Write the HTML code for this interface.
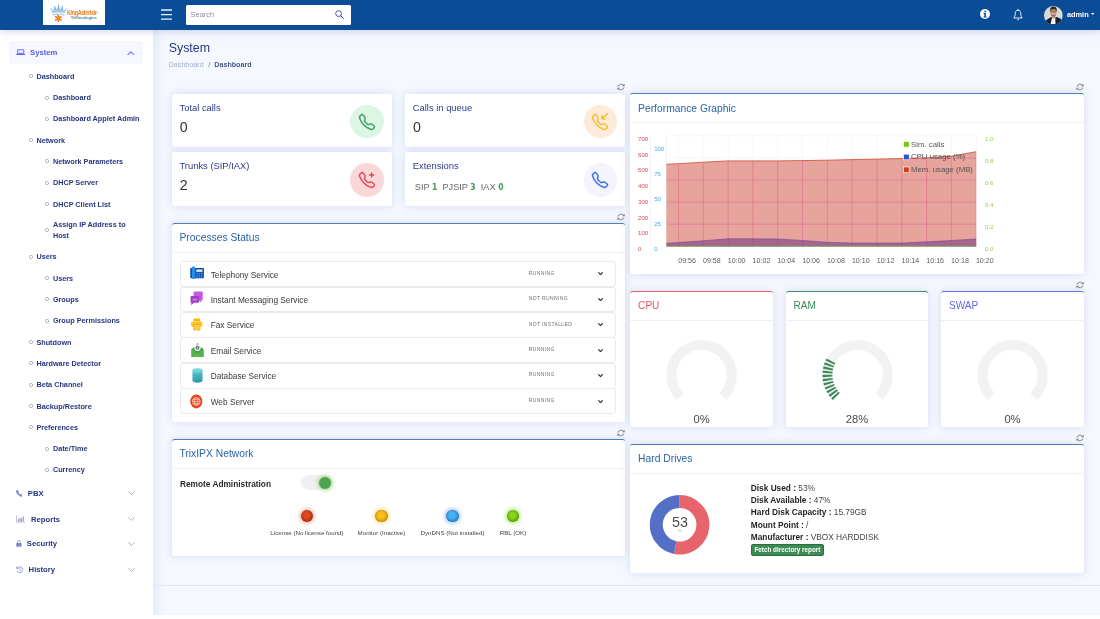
<!DOCTYPE html>
<html lang="en">
<head>
<meta charset="utf-8">
<title>System - Dashboard</title>
<style>
*{box-sizing:border-box;margin:0;padding:0}
html,body{width:1100px;height:619px;overflow:hidden;background:#fff;font-family:"Liberation Sans",sans-serif;}
body{position:relative}
#page{position:absolute;left:0;top:0;width:1100px;height:619px;overflow:hidden;will-change:transform;background:#fff}
.abs{position:absolute}
#main{position:absolute;left:153px;top:30px;width:947px;height:585.2px;background:#f5f8fe;box-shadow:inset 8px 0 8px -4px rgba(186,196,240,.3);}
#header{position:absolute;left:0;top:0;width:1100px;height:30px;background:#0a4d96;box-shadow:0 1px 8px rgba(160,170,210,.5);z-index:5}
#sidebar{position:absolute;left:0;top:30px;width:153px;height:589px;background:#fff}
.logo{position:absolute;left:43.2px;top:0;width:61.5px;height:25.1px;background:#fff}
.search{position:absolute;left:185.6px;top:5px;width:165.5px;height:19.5px;background:#fff;border-radius:1.5px}
.search span{position:absolute;left:5px;top:5px;font-size:7.4px;color:#8a8f99}
.card{position:absolute;background:#fff;border-radius:2.5px;box-shadow:0 0 9px rgba(176,184,235,.45)}
.ptitle{position:absolute;left:7.8px;top:9.6px;font-size:10.3px;color:#2a64a8;white-space:nowrap}
.sep{position:absolute;left:0;right:0;height:1px;background:#eef0f3}
.m{position:absolute;margin-top:1.1px;font-size:7.27px;font-weight:bold;color:#27367f;white-space:nowrap;line-height:10.8px}
.b{position:absolute;width:6px;height:6px;margin:-.85px 0 0 -1.05px;background:radial-gradient(circle at center,rgba(150,158,196,0) 1.25px,rgba(150,158,196,.8) 1.6px,rgba(150,158,196,.8) 1.8px,rgba(150,158,196,0) 2.2px)}
.st{position:absolute;left:7.8px;font-size:9.4px;color:#2b3a8c;white-space:nowrap}
.sv{position:absolute;left:8px;font-size:14.2px;color:#333;white-space:nowrap}
.row{position:absolute;left:8.5px;width:436px;height:25.8px;border:1px solid #e8eaf0;border-radius:3px;background:#fff}
.row .n{position:absolute;left:29.5px;top:7.4px;font-size:8.3px;color:#3a3a3a;white-space:nowrap}
.row .s{position:absolute;left:347.6px;top:7.6px;font-size:5px;color:#6e6e6e;white-space:nowrap;letter-spacing:.36px;line-height:7px}
.hd{left:120.5px;font-size:8.3px;color:#444;white-space:nowrap;line-height:11px}
.hd b{color:#1f1f1f}
.dg{position:relative;top:.6px;color:#43985e;font-size:8.5px;font-family:'DejaVu Sans Condensed','DejaVu Sans','Liberation Sans',sans-serif}
</style>
</head>
<body>
<div id="page">
<div id="main">
<div class="abs" style="left:15.7px;top:9.6px;font-size:12.4px;color:#27367f;line-height:16px">System</div>
<div class="abs" style="left:15.7px;top:29.6px;font-size:7.15px;color:#a3add0;line-height:10px;white-space:nowrap">Dashboard<span style="color:#6b769e;margin:0 4.1px 0 4.6px">/</span><b style="color:#4a5784">Dashboard</b></div>
</div>
<svg class="abs" style="left:617.4px;top:83.2px" width="8" height="8" viewBox="0 0 8 8"><path d="M6.900 2.600A3.300 3.300 0 0 0 1 3.600M1.100 5.400A3.300 3.300 0 0 0 7 4.400" fill="none" stroke="#777" stroke-width=".9"/><path d="M7.600 0.700v2.600H5zM0.400 7.300V4.700H3z" fill="#777"/></svg><svg class="abs" style="left:1076.4px;top:83.2px" width="8" height="8" viewBox="0 0 8 8"><path d="M6.900 2.600A3.300 3.300 0 0 0 1 3.600M1.100 5.400A3.300 3.300 0 0 0 7 4.400" fill="none" stroke="#777" stroke-width=".9"/><path d="M7.600 0.700v2.600H5zM0.400 7.300V4.700H3z" fill="#777"/></svg><svg class="abs" style="left:617.4px;top:212.5px" width="8" height="8" viewBox="0 0 8 8"><path d="M6.900 2.600A3.300 3.300 0 0 0 1 3.600M1.100 5.400A3.300 3.300 0 0 0 7 4.400" fill="none" stroke="#777" stroke-width=".9"/><path d="M7.600 0.700v2.600H5zM0.400 7.300V4.700H3z" fill="#777"/></svg><svg class="abs" style="left:1076.4px;top:281px" width="8" height="8" viewBox="0 0 8 8"><path d="M6.900 2.600A3.300 3.300 0 0 0 1 3.600M1.100 5.400A3.300 3.300 0 0 0 7 4.400" fill="none" stroke="#777" stroke-width=".9"/><path d="M7.600 0.700v2.600H5zM0.400 7.300V4.700H3z" fill="#777"/></svg><svg class="abs" style="left:617.4px;top:428.5px" width="8" height="8" viewBox="0 0 8 8"><path d="M6.900 2.600A3.300 3.300 0 0 0 1 3.600M1.100 5.400A3.300 3.300 0 0 0 7 4.400" fill="none" stroke="#777" stroke-width=".9"/><path d="M7.600 0.700v2.600H5zM0.400 7.300V4.700H3z" fill="#777"/></svg><svg class="abs" style="left:1076.4px;top:434px" width="8" height="8" viewBox="0 0 8 8"><path d="M6.900 2.600A3.300 3.300 0 0 0 1 3.600M1.100 5.400A3.300 3.300 0 0 0 7 4.400" fill="none" stroke="#777" stroke-width=".9"/><path d="M7.600 0.700v2.600H5zM0.400 7.300V4.700H3z" fill="#777"/></svg>
<div class="card" style="left:171.7px;top:93.7px;width:220px;height:53px">
  <div class="st" style="top:8.2px">Total calls</div>
  <div class="sv" style="top:25.3px">0</div>
  <div class="abs" style="left:178.6px;top:11.2px;width:33.4px;height:33.4px;border-radius:50%;background:#ddf5e4"></div>
  <svg class="abs" style="left:187.3px;top:19.9px;overflow:visible" width="16" height="16" viewBox="0 0 16 16"><path fill="#3d9a5f" stroke="#3d9a5f" stroke-width=".42" d="M3.654 1.328a.678.678 0 0 0-1.015-.063L1.605 2.300c-.483.484-.661 1.169-.450 1.770a17.568 17.568 0 0 0 4.168 6.608 17.569 17.569 0 0 0 6.608 4.168c.601.211 1.286.033 1.770-.450l1.034-1.034a.678.678 0 0 0-.063-1.015l-2.307-1.794a.678.678 0 0 0-.580-.122l-2.190.547a1.745 1.745 0 0 1-1.657-.459L5.482 8.062a1.745 1.745 0 0 1-.460-1.657l.548-2.190a.678.678 0 0 0-.122-.580L3.654 1.328zM1.884.511a1.745 1.745 0 0 1 2.612.163L6.290 2.980c.329.423.445.974.315 1.494l-.547 2.190a.678.678 0 0 0 .178.643l2.457 2.457a.678.678 0 0 0 .644.178l2.189-.547a1.745 1.745 0 0 1 1.494.315l2.306 1.794c.829.645.905 1.870.163 2.611l-1.034 1.034c-.740.740-1.846 1.065-2.877.702a18.634 18.634 0 0 1-7.010-4.420 18.634 18.634 0 0 1-4.420-7.009c-.362-1.030-.037-2.137.703-2.877L1.885.511z"/></svg>
</div>
<div class="card" style="left:405px;top:93.7px;width:220px;height:53px">
  <div class="st" style="top:8.2px">Calls in queue</div>
  <div class="sv" style="top:25.3px">0</div>
  <div class="abs" style="left:178.6px;top:11.2px;width:33.4px;height:33.4px;border-radius:50%;background:#fdeadb"></div>
  <svg class="abs" style="left:187.3px;top:19.9px;overflow:visible" width="16" height="16" viewBox="0 0 16 16"><path fill="#f5bb1f" stroke="#f5bb1f" stroke-width=".42" d="M3.654 1.328a.678.678 0 0 0-1.015-.063L1.605 2.300c-.483.484-.661 1.169-.450 1.770a17.568 17.568 0 0 0 4.168 6.608 17.569 17.569 0 0 0 6.608 4.168c.601.211 1.286.033 1.770-.450l1.034-1.034a.678.678 0 0 0-.063-1.015l-2.307-1.794a.678.678 0 0 0-.580-.122l-2.190.547a1.745 1.745 0 0 1-1.657-.459L5.482 8.062a1.745 1.745 0 0 1-.460-1.657l.548-2.190a.678.678 0 0 0-.122-.580L3.654 1.328zM1.884.511a1.745 1.745 0 0 1 2.612.163L6.290 2.980c.329.423.445.974.315 1.494l-.547 2.190a.678.678 0 0 0 .178.643l2.457 2.457a.678.678 0 0 0 .644.178l2.189-.547a1.745 1.745 0 0 1 1.494.315l2.306 1.794c.829.645.905 1.870.163 2.611l-1.034 1.034c-.740.740-1.846 1.065-2.877.702a18.634 18.634 0 0 1-7.010-4.420 18.634 18.634 0 0 1-4.420-7.009c-.362-1.030-.037-2.137.703-2.877L1.885.511z"/><path d="M15.600 -0.400L10 4.800M10 1.500v3.300h3.300" fill="none" stroke="#f5bb1f" stroke-width="1.3" stroke-linecap="round" stroke-linejoin="round"/></svg>
</div>
<div class="card" style="left:171.7px;top:152.3px;width:220px;height:53.6px">
  <div class="st" style="top:8.2px">Trunks (SIP/IAX)</div>
  <div class="sv" style="top:24.3px">2</div>
  <div class="abs" style="left:178.6px;top:11.2px;width:33.4px;height:33.4px;border-radius:50%;background:#fad8da"></div>
  <svg class="abs" style="left:187.3px;top:19.9px;overflow:visible" width="16" height="16" viewBox="0 0 16 16"><path fill="#e04550" stroke="#e04550" stroke-width=".42" d="M3.654 1.328a.678.678 0 0 0-1.015-.063L1.605 2.300c-.483.484-.661 1.169-.450 1.770a17.568 17.568 0 0 0 4.168 6.608 17.569 17.569 0 0 0 6.608 4.168c.601.211 1.286.033 1.770-.450l1.034-1.034a.678.678 0 0 0-.063-1.015l-2.307-1.794a.678.678 0 0 0-.580-.122l-2.190.547a1.745 1.745 0 0 1-1.657-.459L5.482 8.062a1.745 1.745 0 0 1-.460-1.657l.548-2.190a.678.678 0 0 0-.122-.580L3.654 1.328zM1.884.511a1.745 1.745 0 0 1 2.612.163L6.290 2.980c.329.423.445.974.315 1.494l-.547 2.190a.678.678 0 0 0 .178.643l2.457 2.457a.678.678 0 0 0 .644.178l2.189-.547a1.745 1.745 0 0 1 1.494.315l2.306 1.794c.829.645.905 1.870.163 2.611l-1.034 1.034c-.740.740-1.846 1.065-2.877.702a18.634 18.634 0 0 1-7.010-4.420 18.634 18.634 0 0 1-4.420-7.009c-.362-1.030-.037-2.137.703-2.877L1.885.511z"/><path d="M12.600 0.900v4.200M10.500 3h4.200" fill="none" stroke="#e04550" stroke-width="1.35" stroke-linecap="round"/></svg>
</div>
<div class="card" style="left:405px;top:152.3px;width:220px;height:53.6px">
  <div class="st" style="top:8.2px">Extensions</div>
  <div class="abs" style="left:9.8px;top:28.6px;font-size:9.2px;color:#6a6a6a;white-space:nowrap;line-height:12px">SIP <b class="dg">1</b>&nbsp; PJSIP <b class="dg">3</b>&nbsp; IAX <b class="dg">0</b></div>
  <div class="abs" style="left:178.6px;top:11.2px;width:33.4px;height:33.4px;border-radius:50%;background:#f3f4fc"></div>
  <svg class="abs" style="left:187.3px;top:19.9px;overflow:visible" width="16" height="16" viewBox="0 0 16 16"><path fill="#2f6fe8" stroke="#2f6fe8" stroke-width=".42" d="M3.654 1.328a.678.678 0 0 0-1.015-.063L1.605 2.300c-.483.484-.661 1.169-.450 1.770a17.568 17.568 0 0 0 4.168 6.608 17.569 17.569 0 0 0 6.608 4.168c.601.211 1.286.033 1.770-.450l1.034-1.034a.678.678 0 0 0-.063-1.015l-2.307-1.794a.678.678 0 0 0-.580-.122l-2.190.547a1.745 1.745 0 0 1-1.657-.459L5.482 8.062a1.745 1.745 0 0 1-.460-1.657l.548-2.190a.678.678 0 0 0-.122-.580L3.654 1.328zM1.884.511a1.745 1.745 0 0 1 2.612.163L6.290 2.980c.329.423.445.974.315 1.494l-.547 2.190a.678.678 0 0 0 .178.643l2.457 2.457a.678.678 0 0 0 .644.178l2.189-.547a1.745 1.745 0 0 1 1.494.315l2.306 1.794c.829.645.905 1.870.163 2.611l-1.034 1.034c-.740.740-1.846 1.065-2.877.702a18.634 18.634 0 0 1-7.010-4.420 18.634 18.634 0 0 1-4.420-7.009c-.362-1.030-.037-2.137.703-2.877L1.885.511z"/></svg>
</div>

<div id="sidebar">
<div class="abs" style="left:8.6px;top:11px;width:134.2px;height:22.7px;background:#f6f7ff;border-radius:2.5px"></div>
<svg class="abs" style="left:15.6px;top:18.2px" width="9.4" height="7.4" viewBox="0 0 19 15"><path d="M3.300 3.600h12.400v7H3.300z" fill="none" stroke="#5a5cf0" stroke-width="1.800"/><path d="M0.5 11.6h18v1.2c0 .9-.7 1.5-1.5 1.5H2c-.8 0-1.5-.6-1.5-1.5z" fill="#5a5cf0"/></svg>
<div class="m" style="left:30.1px;top:16.85px;color:#5a5cf0;font-size:7.7px">System</div>
<svg class="abs" style="left:127.2px;top:20.7px" width="7.7" height="4.5" viewBox="0 0 7.7 4.5"><path d="M0.500 4.100 L3.850 0.800 L7.200 4.100" fill="none" stroke="#7476f2" stroke-width="1.050"/></svg>
<div class="b" style="left:28.95px;top:44.05px"></div><div class="m" style="left:36.4px;top:40.75px">Dashboard</div>
<div class="b" style="left:45.25px;top:65.35px"></div><div class="m" style="left:52.9px;top:62.05px">Dashboard</div>
<div class="b" style="left:45.25px;top:86.65px"></div><div class="m" style="left:52.9px;top:83.35px">Dashboard Applet Admin</div>
<div class="b" style="left:28.95px;top:107.95px"></div><div class="m" style="left:36.4px;top:104.65px">Network</div>
<div class="b" style="left:45.25px;top:129.25px"></div><div class="m" style="left:52.9px;top:125.95px">Network Parameters</div>
<div class="b" style="left:45.25px;top:150.55px"></div><div class="m" style="left:52.9px;top:147.25px">DHCP Server</div>
<div class="b" style="left:45.25px;top:171.85px"></div><div class="m" style="left:52.9px;top:168.55px">DHCP Client List</div>
<div class="b" style="left:45.25px;top:197.95px"></div><div class="m" style="left:52.9px;top:189.25px">Assign IP Address to<br>Host</div>
<div class="b" style="left:28.95px;top:224.55px"></div><div class="m" style="left:36.4px;top:221.25px">Users</div>
<div class="b" style="left:45.25px;top:245.95px"></div><div class="m" style="left:52.9px;top:242.65px">Users</div>
<div class="b" style="left:45.25px;top:267.25px"></div><div class="m" style="left:52.9px;top:263.95px">Groups</div>
<div class="b" style="left:45.25px;top:288.55px"></div><div class="m" style="left:52.9px;top:285.25px">Group Permissions</div>
<div class="b" style="left:28.95px;top:309.85px"></div><div class="m" style="left:36.4px;top:306.55px">Shutdown</div>
<div class="b" style="left:28.95px;top:331.15px"></div><div class="m" style="left:36.4px;top:327.85px">Hardware Detector</div>
<div class="b" style="left:28.95px;top:352.45px"></div><div class="m" style="left:36.4px;top:349.15px">Beta Channel</div>
<div class="b" style="left:28.95px;top:373.75px"></div><div class="m" style="left:36.4px;top:370.45px">Backup/Restore</div>
<div class="b" style="left:28.95px;top:395.05px"></div><div class="m" style="left:36.4px;top:391.75px">Preferences</div>
<div class="b" style="left:45.25px;top:416.35px"></div><div class="m" style="left:52.9px;top:413.05px">Date/Time</div>
<div class="b" style="left:45.25px;top:437.65px"></div><div class="m" style="left:52.9px;top:434.35px">Currency</div>

<svg class="abs" style="left:15.7px;top:460.3px" width="6.8" height="6.8" viewBox="0 0 16 16"><path fill="#7f8bbd" d="M1.885.511a1.745 1.745 0 0 1 2.61.163L6.29 2.98c.329.423.445.974.315 1.494l-.547 2.19a.678.678 0 0 0 .178.643l2.457 2.457a.678.678 0 0 0 .644.178l2.189-.547a1.745 1.745 0 0 1 1.494.315l2.306 1.794c.829.645.905 1.87.163 2.611l-1.034 1.034c-.74.74-1.846 1.065-2.877.702a18.634 18.634 0 0 1-7.010-4.420 18.634 18.634 0 0 1-4.420-7.009c-.362-1.030-.037-2.137.703-2.877L1.885.511z"/></svg>
<div class="m" style="left:27.8px;top:458.34px;font-size:7.7px">PBX</div><svg class="abs" style="left:127.9px;top:461.20px" width="7" height="4" viewBox="0 0 7 4"><path d="M0.4 0.4 L3.5 3.4 L6.6 0.4" fill="none" stroke="#98a2c9" stroke-width=".85"/></svg>
<svg class="abs" style="left:15.7px;top:485px" width="9.6" height="7.6" viewBox="0 0 19 15"><path d="M0.8 0.5v13.7h17.7" fill="none" stroke="#7f8bbd" stroke-width="1"/><path d="M3.600 8.500h2v4.200h-2zM6.800 5h2v7.700h-2zM10 6.800h2v5.900h-2zM13.200 3h2v9.700h-2z" fill="#7f8bbd"/></svg>
<div class="m" style="left:31px;top:483.84px;font-size:7.7px">Reports</div><svg class="abs" style="left:127.9px;top:486.70px" width="7" height="4" viewBox="0 0 7 4"><path d="M0.4 0.4 L3.5 3.4 L6.6 0.4" fill="none" stroke="#98a2c9" stroke-width=".85"/></svg>
<svg class="abs" style="left:15.8px;top:510px" width="5.8" height="6.8" viewBox="0 0 14 16"><path d="M2 7h10a1.500 1.500 0 0 1 1.500 1.500v6a1.500 1.500 0 0 1-1.500 1.500H2a1.500 1.500 0 0 1-1.500-1.500v-6A1.500 1.500 0 0 1 2 7z" fill="#7f8bbd"/><path d="M3.500 7.500V4.800a3.500 3.500 0 0 1 7 0V7.500" fill="none" stroke="#7f8bbd" stroke-width="1.800"/></svg>
<div class="m" style="left:26.8px;top:508.34px;font-size:7.7px">Security</div><svg class="abs" style="left:127.9px;top:511.70px" width="7" height="4" viewBox="0 0 7 4"><path d="M0.4 0.4 L3.5 3.4 L6.6 0.4" fill="none" stroke="#98a2c9" stroke-width=".85"/></svg>
<svg class="abs" style="left:15.6px;top:535.5px" width="7.6" height="7.6" viewBox="0 0 16 16"><path d="M3.400 4.200A6 6 0 1 1 2.200 9.800" fill="none" stroke="#7f8bbd" stroke-width="1.700"/><path d="M0.300 1.300l.8 5 4.800-1.100z" fill="#7f8bbd"/><path d="M8.200 5v3.500l2.300 1.300" fill="none" stroke="#7f8bbd" stroke-width="1.400"/></svg>
<div class="m" style="left:28.6px;top:533.94px;font-size:7.7px">History</div><svg class="abs" style="left:127.9px;top:537.70px" width="7" height="4" viewBox="0 0 7 4"><path d="M0.4 0.4 L3.5 3.4 L6.6 0.4" fill="none" stroke="#98a2c9" stroke-width=".85"/></svg>
</div>
<div id="header">
  <div class="logo">
    <svg class="abs" style="left:6.3px;top:2.9px" width="19" height="20" viewBox="0 0 19 20">
      <defs><linearGradient id="cg" x1="0" y1="0" x2="0" y2="1"><stop offset="0" stop-color="#5a9bd0"/><stop offset="1" stop-color="#b9d8ee"/></linearGradient></defs>
      <path d="M1.2 4.400 L4.300 8 L5.600 2.600 L8 7 L9.500 0.600 L11 7 L13.400 2.600 L14.700 8 L17.800 4.400 L15.600 10.600 Q9.500 8.400 3.400 10.600 Z" fill="url(#cg)"/>
      <path d="M3.300 11.600 Q9.500 9.300 15.700 11.600 L15.300 12.800 Q9.500 10.800 3.700 12.800 Z" fill="#a9cfe8"/>
      <g stroke="#f47a1f" stroke-width="1.700" stroke-linecap="round"><path d="M9.300 12.600v5.600M6.600 13.800l5.400 3.200M12 13.800l-5.400 3.200"/></g>
    </svg>
    <div class="abs" style="left:23.5px;top:8.7px;font-size:6.6px;font-weight:bold;color:#e8811f;letter-spacing:-.42px;white-space:nowrap;line-height:8px;transform:scaleX(.82);transform-origin:0 0">KingAsterisk<span style="font-size:3px;vertical-align:top;color:#8a8a8a">®</span></div>
    <div class="abs" style="left:27.6px;top:14.5px;font-size:4.25px;font-weight:bold;color:#4f88a6;white-space:nowrap;line-height:6px;letter-spacing:-.1px">Technologies</div>
  </div>
  <svg class="abs" style="left:161px;top:8.5px" width="11.2" height="11.2" viewBox="0 0 11.2 11.2"><path d="M0 1h11.200M0 5.550h11.200M0 10.100h11.200" stroke="#eef2f9" stroke-width="1.300"/></svg>
  <div class="search"><span>Search</span>
    <svg class="abs" style="left:149.4px;top:5.2px" width="9" height="9" viewBox="0 0 9 9"><circle cx="3.600" cy="3.600" r="2.900" fill="none" stroke="#2b3a8c" stroke-width=".85"/><path d="M5.700 5.700L8.400 8.400" stroke="#2b3a8c" stroke-width="1" stroke-linecap="round"/></svg>
  </div>
  <svg class="abs" style="left:980.3px;top:8.9px" width="10" height="10" viewBox="0 0 10 10"><circle cx="5" cy="5" r="5" fill="#fff"/><path d="M4.300 1.700h1.600v1.500H4.300zM3.600 4.100h2.300v3.300h.7v1H3.500v-1h.8V5.100h-.7z" fill="#0a4d96"/></svg>
  <svg class="abs" style="left:1012.6px;top:8.7px" width="10" height="12.2" viewBox="0 0 10 12.200"><path d="M5 1.200C2.900 1.200 2.200 3 2.200 4.800c0 2.100-.6 3.300-1.500 4.200h8.600C8.400 8.100 7.800 6.900 7.800 4.800 7.800 3 7.100 1.200 5 1.200z" fill="none" stroke="#fff" stroke-width=".9" stroke-linejoin="round"/><path d="M5 0.300v1" stroke="#fff" stroke-width=".9" stroke-linecap="round"/><path d="M3.900 10.200a1.100 1.100 0 0 0 2.200 0z" fill="#fff"/></svg>
  <svg class="abs" style="left:1044.1px;top:5.5px" width="18.8" height="18.800" viewBox="0 0 38 38">
    <defs><clipPath id="av"><circle cx="19" cy="19" r="19"/></clipPath></defs>
    <g clip-path="url(#av)">
      <rect width="38" height="38" fill="#d9d9d8"/>
      <path d="M2.500 38 L4.300 29 Q8 25.500 14.500 22 L25.500 22 Q32 24 35.500 27.500 L37 38 Z" fill="#1b2132"/>
      <path d="M15.300 22.500 L22.800 22 L23.300 38 L11 38 Z" fill="#f2f2f4"/>
      <path d="M14.500 22 L10.500 38 L12.800 38 L16.200 24 Z" fill="#11161f"/>
      <path d="M15.800 17h6.400v6l-3.200 3.400-3.200-3.400z" fill="#c59a80"/>
      <ellipse cx="19" cy="12.300" rx="6.300" ry="8.200" fill="#d4ab90"/>
      <path d="M12.600 11.500 C11.300 3 16 1.100 19.500 1.200 C24.200 1.400 27 5 25.400 11.500 C24.800 8 23 6.400 19 6.400 C15.500 6.400 13.500 7.600 12.600 11.500z" fill="#38281f"/>
      <path d="M12.900 14 C13.400 19.800 16 21.300 19 21.300 C22 21.300 24.600 19.800 25.100 14 C24.200 17.600 22 18.400 19 18.400 C16 18.400 13.800 17.600 12.900 14z" fill="#7a5646" opacity=".7"/>
      <path d="M13.300 9.800h4.900v2.700h-4.900zM19.900 9.800h4.900v2.700h-4.900zM18.200 10.800h1.700" fill="none" stroke="#2d2d2d" stroke-width=".75"/>
    </g>
  </svg>
  <div class="abs" style="left:1066.9px;top:10.4px;font-size:7.4px;font-weight:bold;color:#fff;line-height:10px;white-space:nowrap">admin</div>
  <svg class="abs" style="left:1090.5px;top:13.2px" width="3.4" height="2" viewBox="0 0 3.4 2"><path d="M0 0h3.400L1.700 1.900z" fill="#fff"/></svg>
</div>
<div class="card" style="left:171.7px;top:222.8px;width:453.3px;height:198.8px;border-top:1.1px solid #4d7fbd">
  <div class="ptitle" style="color:#2a64a8;top:8.4px">Processes Status</div>
  <div class="sep" style="top:28.2px"></div>
  <div class="row" style="top:37.40px"><svg class="abs" style="left:8.4px;top:3.9px" width="14.2" height="13.2" viewBox="0 0 28 26"><rect x="0.500" y="4" width="27" height="20" rx="1.200" fill="#0c52ab"/><rect x="3.800" y="0.800" width="6.400" height="24.800" rx="2.400" fill="#2590ea"/><rect x="12.500" y="7" width="12" height="4.500" fill="#e8f2ff"/><g fill="#5d95de"><rect x="12.500" y="13.500" width="3" height="2"/><rect x="17" y="13.500" width="3" height="2"/><rect x="21.500" y="13.500" width="3" height="2"/><rect x="12.500" y="17" width="3" height="2"/><rect x="17" y="17" width="3" height="2"/><rect x="21.500" y="17" width="3" height="2"/><rect x="12.500" y="20.300" width="3" height="2"/><rect x="17" y="20.300" width="3" height="2"/><rect x="21.500" y="20.300" width="3" height="2"/></g></svg><div class="n">Telephony Service</div><div class="s">RUNNING</div><svg class="abs" style="left:416.8px;top:10.3px" width="5.1" height="3.4" viewBox="0 0 5.4 3.6"><path d="M0.700 0.700L2.700 2.700L4.700 0.700" fill="none" stroke="#222" stroke-width="1.150" stroke-linecap="round" stroke-linejoin="round"/></svg></div>
<div class="row" style="top:62.82px"><svg class="abs" style="left:8.800px;top:3.500px" width="13.300" height="14.800" viewBox="0 0 26 29"><path d="M9 1h14a2 2 0 0 1 2 2v13a2 2 0 0 1-2 2h-1v4.500L17 18H9a2 2 0 0 1-2-2V3a2 2 0 0 1 2-2z" fill="#c65ae0"/><path d="M3 10h13a2 2 0 0 1 2 2v9a2 2 0 0 1-2 2H7.500L2.500 28v-5H3a2 2 0 0 1-2-2v-9a2 2 0 0 1 2-2z" fill="#a13fc8"/><rect x="5" y="15" width="9" height="3.500" fill="#d9a6ee" opacity=".7"/></svg><div class="n">Instant Messaging Service</div><div class="s">NOT RUNNING</div><svg class="abs" style="left:416.8px;top:10.3px" width="5.1" height="3.4" viewBox="0 0 5.4 3.6"><path d="M0.700 0.700L2.700 2.700L4.700 0.700" fill="none" stroke="#222" stroke-width="1.150" stroke-linecap="round" stroke-linejoin="round"/></svg></div>
<div class="row" style="top:88.24px"><svg class="abs" style="left:10px;top:5.200px" width="11.600" height="13" viewBox="0 0 24 26"><rect x="5" y="0.500" width="14" height="6" rx="1.500" fill="#f7b500"/><rect x="0.500" y="7" width="23" height="10.500" rx="2.500" fill="#fdc321"/><rect x="4.500" y="12.500" width="15" height="13" rx="1.500" fill="#f7b500"/><rect x="6.500" y="14.500" width="11" height="9" fill="#ffd863"/><path d="M8.500 17.500h7M8.500 20.500h7" stroke="#f7b500" stroke-width="1.200"/></svg><div class="n">Fax Service</div><div class="s">NOT INSTALLED</div><svg class="abs" style="left:416.8px;top:10.3px" width="5.1" height="3.4" viewBox="0 0 5.4 3.6"><path d="M0.700 0.700L2.700 2.700L4.700 0.700" fill="none" stroke="#222" stroke-width="1.150" stroke-linecap="round" stroke-linejoin="round"/></svg></div>
<div class="row" style="top:113.66px"><svg class="abs" style="left:9.400px;top:3.200px" width="13" height="15.500" viewBox="0 0 26 31"><path d="M13 2L16 5.500H10z" fill="#3a9a3a"/><path d="M1 14L13 6l12 8v15a1.500 1.500 0 0 1-1.500 1.500h-21A1.500 1.500 0 0 1 1 29z" fill="#3f9e3c"/><circle cx="13" cy="11.500" r="6.600" fill="#eef1f2"/><circle cx="13" cy="11.500" r="4" fill="#6d777d"/><circle cx="13" cy="12" r="1.400" fill="#e9eef0"/><path d="M1 14l12 9 12-9v15a1.500 1.500 0 0 1-1.500 1.500h-21A1.500 1.500 0 0 1 1 29z" fill="#56b64f"/><path d="M1 29.500L10.500 21M25 29.500L15.500 21" stroke="#3f9e3c" stroke-width="1"/></svg><div class="n">Email Service</div><div class="s">RUNNING</div><svg class="abs" style="left:416.8px;top:10.3px" width="5.1" height="3.4" viewBox="0 0 5.4 3.6"><path d="M0.700 0.700L2.700 2.700L4.700 0.700" fill="none" stroke="#222" stroke-width="1.150" stroke-linecap="round" stroke-linejoin="round"/></svg></div>
<div class="row" style="top:139.08px"><svg class="abs" style="left:10.500px;top:4px" width="11" height="15" viewBox="0 0 22 30"><defs><linearGradient id="dbg" x1="0" y1="0" x2="0" y2="1"><stop offset="0" stop-color="#58c6d2"/><stop offset="1" stop-color="#2a93a6"/></linearGradient></defs><path d="M1 5v20c0 2.500 4.500 4.500 10 4.500s10-2 10-4.500V5z" fill="url(#dbg)"/><ellipse cx="11" cy="5" rx="10" ry="4.300" fill="#6fd3dd"/><path d="M1 12c0 2.500 4.500 4.300 10 4.300s10-1.800 10-4.300M1 19c0 2.500 4.500 4.300 10 4.300s10-1.800 10-4.300" fill="none" stroke="#3fa9b8" stroke-width="1"/><g fill="#bff0f4"><circle cx="4" cy="11" r="0.900"/><circle cx="4" cy="18" r="0.900"/><circle cx="4" cy="25" r="0.900"/></g></svg><div class="n">Database Service</div><div class="s">RUNNING</div><svg class="abs" style="left:416.8px;top:10.3px" width="5.1" height="3.4" viewBox="0 0 5.4 3.6"><path d="M0.700 0.700L2.700 2.700L4.700 0.700" fill="none" stroke="#222" stroke-width="1.150" stroke-linecap="round" stroke-linejoin="round"/></svg></div>
<div class="row" style="top:164.50px"><svg class="abs" style="left:9.300px;top:4.600px" width="12.600" height="14.800" viewBox="0 0 26 30"><ellipse cx="13" cy="15" rx="12.500" ry="14.500" fill="#e8431c"/><circle cx="13" cy="15" r="8" fill="none" stroke="#ffe1d6" stroke-width="1.500"/><ellipse cx="13" cy="15" rx="3.600" ry="8" fill="none" stroke="#ffe1d6" stroke-width="1.300"/><path d="M5 15h16M6.300 11h13.400M6.300 19h13.400" stroke="#ffe1d6" stroke-width="1.300"/></svg><div class="n">Web Server</div><div class="s">RUNNING</div><svg class="abs" style="left:416.8px;top:10.3px" width="5.1" height="3.4" viewBox="0 0 5.4 3.6"><path d="M0.700 0.700L2.700 2.700L4.700 0.700" fill="none" stroke="#222" stroke-width="1.150" stroke-linecap="round" stroke-linejoin="round"/></svg></div>

</div>
<div class="card" style="left:171.7px;top:439.2px;width:453.3px;height:117.3px;border-top:1.1px solid #4d7fbd">
  <div class="ptitle" style="color:#2a64a8;top:7.9px">TrixIPX Network</div>
  <div class="sep" style="top:27.6px"></div>
  <div class="abs" style="left:8.3px;top:38.6px;font-size:8.3px;font-weight:bold;color:#2b2b2b;line-height:11px;white-space:nowrap">Remote Administration</div>
<div class="abs" style="left:129.4px;top:34.700px;width:31.500px;height:15.400px;border-radius:7.500px;background:#f0f0f0"></div>
<div class="abs" style="left:147px;top:36.400px;width:12px;height:12px;border-radius:50%;background:#4fa24f;box-shadow:0 0 4px 1px rgba(120,210,90,.8)"></div>
<div class="abs" style="left:129.70000000000002px;top:69.7px;width:12.2px;height:12.2px;margin-left:-.5px;border-radius:50%;background:radial-gradient(circle at 45% 40%,#e0491e 0%,#e0491e 30%,#b8300f 75%);box-shadow:inset 0 0 2.5px rgba(0,0,0,.35),0 0 4px 1.200px rgba(225,120,90,.65)"></div>
<div class="abs" style="left:85.30000000000001px;width:100px;text-align:center;top:89.100px;font-size:6.2px;color:#444;line-height:8px;white-space:nowrap">License (No license found)</div>
<div class="abs" style="left:204.20000000000002px;top:69.7px;width:12.2px;height:12.2px;margin-left:-.5px;border-radius:50%;background:radial-gradient(circle at 45% 40%,#f5c01a 0%,#f5c01a 30%,#e0a000 75%);box-shadow:inset 0 0 2.5px rgba(0,0,0,.35),0 0 4px 1.200px rgba(245,200,90,.7)"></div>
<div class="abs" style="left:159.8px;width:100px;text-align:center;top:89.100px;font-size:6.2px;color:#444;line-height:8px;white-space:nowrap">Monitor (Inactive)</div>
<div class="abs" style="left:275.2px;top:69.7px;width:12.2px;height:12.2px;margin-left:-.5px;border-radius:50%;background:radial-gradient(circle at 45% 40%,#46b3f0 0%,#46b3f0 30%,#2688d8 75%);box-shadow:inset 0 0 2.5px rgba(0,0,0,.35),0 0 4px 1.200px rgba(90,140,230,.6)"></div>
<div class="abs" style="left:230.8px;width:100px;text-align:center;top:89.100px;font-size:6.2px;color:#444;line-height:8px;white-space:nowrap">DynDNS (Not installed)</div>
<div class="abs" style="left:335.7px;top:69.7px;width:12.2px;height:12.2px;margin-left:-.5px;border-radius:50%;background:radial-gradient(circle at 45% 40%,#8bd41c 0%,#8bd41c 30%,#5fae00 75%);box-shadow:inset 0 0 2.5px rgba(0,0,0,.35),0 0 4px 1.200px rgba(140,220,60,.75)"></div>
<div class="abs" style="left:291.3px;width:100px;text-align:center;top:89.100px;font-size:6.2px;color:#444;line-height:8px;white-space:nowrap">RBL (OK)</div>

</div>
<div class="card" style="left:630.3px;top:93.3px;width:453.7px;height:180.8px;border-top:1.1px solid #4d7fbd">
  <div class="ptitle" style="color:#2a64a8;top:8.7px">Performance Graphic</div>
  <div class="sep" style="top:28.2px"></div>
</div>
<svg class="abs" style="left:0;top:0" width="1100" height="619" viewBox="0 0 1100 619" font-family="Liberation Sans, sans-serif">
<g stroke="#f1f1f1" stroke-width=".6">
<path d="M678.5 135.9V246.3"/>
<path d="M703.3 135.9V246.3"/>
<path d="M728.1 135.9V246.3"/>
<path d="M752.9 135.9V246.3"/>
<path d="M777.7 135.9V246.3"/>
<path d="M802.5 135.9V246.3"/>
<path d="M827.4 135.9V246.3"/>
<path d="M852.2 135.9V246.3"/>
<path d="M877.0 135.9V246.3"/>
<path d="M901.8 135.9V246.3"/>
<path d="M926.6 135.9V246.3"/>
<path d="M951.4 135.9V246.3"/>
<path d="M976.2 135.9V246.3"/>
<path d="M666.4 224.2H976.2"/>
<path d="M666.4 202.1H976.2"/>
<path d="M666.4 180.1H976.2"/>
<path d="M666.4 158.0H976.2"/>
<path d="M666.4 135.9H976.2"/>
</g>
<path d="M650.6 135.9V246.3M666.4 135.9V246.3" stroke="#ececec" stroke-width=".7"/>
<polygon points="666.4,164.3 678.5,163.7 703.3,162.2 728.1,160.9 752.9,160.9 777.7,160.9 802.6,160.6 827.4,160.2 852.2,159.6 877.0,159.1 901.8,158.6 926.6,157.8 951.4,156.2 976.2,151.7 976.2,246.3 666.4,246.3" fill="#d9756b" fill-opacity=".66"/>
<polyline points="666.4,164.3 678.5,163.7 703.3,162.2 728.1,160.9 752.9,160.9 777.7,160.9 802.6,160.6 827.4,160.2 852.2,159.6 877.0,159.1 901.8,158.6 926.6,157.8 951.4,156.2 976.2,151.7" fill="none" stroke="#cf5a45" stroke-width=".9"/>
<clipPath id="rc"><polygon points="666.4,164.3 678.5,163.7 703.3,162.2 728.1,160.9 752.9,160.9 777.7,160.9 802.6,160.6 827.4,160.2 852.2,159.6 877.0,159.1 901.8,158.6 926.6,157.8 951.4,156.2 976.2,151.7 976.2,246.3 666.4,246.3"/></clipPath>
<g clip-path="url(#rc)" stroke="#e0608f" stroke-opacity=".45" stroke-width="1">
<path d="M678.5 135.9V246.3"/>
<path d="M703.3 135.9V246.3"/>
<path d="M728.1 135.9V246.3"/>
<path d="M752.9 135.9V246.3"/>
<path d="M777.7 135.9V246.3"/>
<path d="M802.5 135.9V246.3"/>
<path d="M827.4 135.9V246.3"/>
<path d="M852.2 135.9V246.3"/>
<path d="M877.0 135.9V246.3"/>
<path d="M901.8 135.9V246.3"/>
<path d="M926.6 135.9V246.3"/>
<path d="M951.4 135.9V246.3"/>
<path d="M976.2 135.9V246.3"/>
<path d="M666.4 224.2H976.2"/>
<path d="M666.4 202.1H976.2"/>
<path d="M666.4 180.1H976.2"/>
<path d="M666.4 158.0H976.2"/>
</g>
<polygon points="666.4,243.2 678.5,242.5 703.3,240.8 728.1,238.8 752.9,238.8 777.7,239.0 802.6,240.4 827.4,242.3 852.2,243.0 877.0,243.0 901.8,243.0 926.6,241.8 951.4,240.5 976.2,239.0 976.2,246.3 666.4,246.3" fill="#7a3f88" fill-opacity=".62"/>
<polyline points="666.4,243.2 678.5,242.5 703.3,240.8 728.1,238.8 752.9,238.8 777.7,239.0 802.6,240.4 827.4,242.3 852.2,243.0 877.0,243.0 901.8,243.0 926.6,241.8 951.4,240.5 976.2,239.0" fill="none" stroke="#6a3a8a" stroke-opacity=".7" stroke-width=".7"/>
<path d="M666.4 246.3H976.2" stroke="#6fa84a" stroke-width=".9"/>
<g font-size="6" fill="#d24a63" text-anchor="start" transform="translate(-.2,-.2)">
<text x="638.3" y="141.1">700</text>
<text x="638.3" y="156.8">600</text>
<text x="638.3" y="172.6">500</text>
<text x="638.3" y="188.3">400</text>
<text x="638.3" y="204.1">300</text>
<text x="638.3" y="219.8">200</text>
<text x="638.3" y="235.6">100</text>
<text x="638.3" y="251.3">0</text>
</g><g font-size="6" fill="#49a4ee" transform="translate(-.1,-.2)">
<text x="654.3" y="150.8">100</text>
<text x="654.3" y="175.9">75</text>
<text x="654.3" y="201.1">50</text>
<text x="654.3" y="226.2">25</text>
<text x="654.3" y="251.3">0</text>
</g><g font-size="6" fill="#8fd347" transform="translate(-.1,-.2)">
<text x="985.2" y="141.1">1.0</text>
<text x="985.2" y="163.2">0.8</text>
<text x="985.2" y="185.2">0.6</text>
<text x="985.2" y="207.3">0.4</text>
<text x="985.2" y="229.3">0.2</text>
<text x="985.2" y="251.4">0.0</text>
</g><g font-size="7.100" fill="#5c5c5c">
<text x="678.2" y="262.700">09:56</text>
<text x="703.0" y="262.700">09:58</text>
<text x="727.8" y="262.700">10:00</text>
<text x="752.6" y="262.700">10:02</text>
<text x="777.4" y="262.700">10:04</text>
<text x="802.2" y="262.700">10:06</text>
<text x="827.1" y="262.700">10:08</text>
<text x="851.9" y="262.700">10:10</text>
<text x="876.7" y="262.700">10:12</text>
<text x="901.5" y="262.700">10:14</text>
<text x="926.3" y="262.700">10:16</text>
<text x="951.1" y="262.700">10:18</text>
<text x="975.9" y="262.700">10:20</text>
</g>
<rect x="903.600" y="141.5" width="5.600" height="5.600" fill="#7ac70c" stroke="#fff" stroke-opacity=".85" stroke-width=".7"/>
<text x="911" y="146.5" font-size="7.800" fill="#555">Sim. calls</text>
<rect x="903.600" y="154.2" width="5.600" height="5.600" fill="#2a55c8" stroke="#fff" stroke-opacity=".85" stroke-width=".7"/>
<text x="911" y="159.2" font-size="7.800" fill="#555">CPU usage (%)</text>
<rect x="903.600" y="167.0" width="5.600" height="5.600" fill="#cb3f1a" stroke="#fff" stroke-opacity=".85" stroke-width=".7"/>
<text x="911" y="172.0" font-size="7.800" fill="#555">Mem. usage (MB)</text>
</svg>
<div class="card" style="left:630.3px;top:290.7px;width:142.6px;height:136px;border-top:1.1px solid #e8646a">
  <div class="ptitle" style="color:#e0565f;top:8.6px;font-size:10.1px">CPU</div>
  <div class="sep" style="top:28.6px"></div>
  <svg class="abs" style="left:0;top:0" width="142.500" height="134" viewBox="0 0 142.500 134"><path d="M50.25 104.45A30.2 30.2 0 1 1 92.95 104.45" fill="none" stroke="#f2f2f2" stroke-width="10"/></svg>
  <div class="abs" style="left:0;width:142.600px;text-align:center;top:120.500px;font-size:11.200px;color:#4a4a4a;line-height:14px">0%</div>
</div><div class="card" style="left:785.7px;top:290.7px;width:142.6px;height:136px;border-top:1.1px solid #3f9160">
  <div class="ptitle" style="color:#3a8a5a;top:8.6px;font-size:10.1px">RAM</div>
  <div class="sep" style="top:28.6px"></div>
  <svg class="abs" style="left:0;top:0" width="142.500" height="134" viewBox="0 0 142.500 134"><path d="M50.25 104.45A30.2 30.2 0 1 1 92.95 104.45" fill="none" stroke="#f2f2f2" stroke-width="10"/><path d="M50.25 104.45A30.2 30.2 0 0 1 45.61 67.73" fill="none" stroke="#3b8a5a" stroke-width="10" stroke-dasharray="2 1.640"/></svg>
  <div class="abs" style="left:0;width:142.600px;text-align:center;top:120.500px;font-size:11.200px;color:#4a4a4a;line-height:14px">28%</div>
</div><div class="card" style="left:941.2px;top:290.7px;width:142.6px;height:136px;border-top:1.1px solid #6574f0">
  <div class="ptitle" style="color:#5b68ee;top:8.6px;font-size:10.1px">SWAP</div>
  <div class="sep" style="top:28.6px"></div>
  <svg class="abs" style="left:0;top:0" width="142.500" height="134" viewBox="0 0 142.500 134"><path d="M50.25 104.45A30.2 30.2 0 1 1 92.95 104.45" fill="none" stroke="#f2f2f2" stroke-width="10"/></svg>
  <div class="abs" style="left:0;width:142.600px;text-align:center;top:120.500px;font-size:11.200px;color:#4a4a4a;line-height:14px">0%</div>
</div>
<div class="card" style="left:630.3px;top:443.8px;width:453.7px;height:129.6px;border-top:1.1px solid #4d7fbd">
  <div class="ptitle" style="color:#2a64a8;top:8.6px">Hard Drives</div>
  <div class="sep" style="top:28.7px"></div>
  <svg class="abs" style="left:0;top:0" width="120" height="128" viewBox="0 0 120 128">
<path d="M49.60 56.40A23.3 23.3 0 1 1 45.23 102.59" fill="none" stroke="#e8646c" stroke-width="13.0"/>
<path d="M45.23 102.59A23.3 23.3 0 0 1 49.60 56.40" fill="none" stroke="#5470c6" stroke-width="13.0"/>
</svg>
<div class="abs" style="left:29.6px;width:40px;text-align:center;top:68.2px;font-size:14.300px;color:#4a4a4a;line-height:18px">53</div>
<div class="abs" style="left:29.6px;width:40px;text-align:center;top:83.9px;font-size:3.500px;color:#999;line-height:5px">%</div>
  <div class="abs hd" style="top:38.20px"><b>Disk Used :</b> 53%</div>
<div class="abs hd" style="top:50.53px"><b>Disk Available :</b> 47%</div>
<div class="abs hd" style="top:62.40px"><b>Hard Disk Capacity :</b> 15.79GB</div>
<div class="abs hd" style="top:75.19px"><b>Mount Point :</b> /</div>
<div class="abs hd" style="top:87.52px"><b>Manufacturer :</b> VBOX HARDDISK</div>
<div class="abs" style="left:120.500px;top:99.400px;width:73.200px;height:11.700px;background:#3d8b53;border:.7px solid #2c6e3f;border-radius:2px;color:#fff;font-size:6.350px;font-weight:bold;line-height:10.300px;text-align:center;white-space:nowrap">Fetch directory report</div>
</div>
<div class="abs" style="left:153px;top:585px;width:947px;height:.9px;background:#dfe7f8"></div>
</div>
</body>
</html>
